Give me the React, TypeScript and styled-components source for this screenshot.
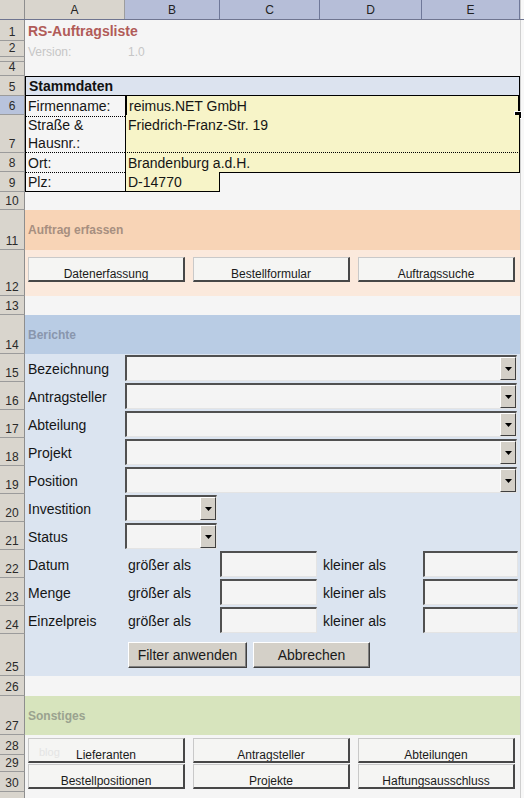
import React from 'react';
import styled, { createGlobalStyle } from 'styled-components';

const GlobalStyle = createGlobalStyle`
  * { box-sizing: border-box; }
  html, body { margin: 0; padding: 0; background: #f5f5f5; }
  body { font-family: 'Liberation Sans', Arial, sans-serif; overflow: hidden; }
`;

const Sheet = styled.div`
  width: 524px;
  background: #f5f5f5;
  color: #111;
`;

const HeadRow = styled.div`
  display: flex;
  height: 20px;
  border-bottom: 1px solid #6f7590;
`;

const Corner = styled.div`
  width: 25px;
  background: #d9d5cd;
  border-right: 1px solid #8e8e8e;
`;

const ColHead = styled.div<{ $w: number; $sel?: boolean }>`
  width: ${p => p.$w}px;
  background: ${p => (p.$sel ? '#b6bed8' : '#d9d5cd')};
  border-right: 1px solid ${p => (p.$sel ? '#6f7899' : '#9d9d9d')};
  font-size: 12px;
  line-height: 19px;
  padding-top: 1px;
  text-align: center;
  color: #222;
`;

const Row = styled.div<{ $h: number }>`
  display: flex;
  height: ${p => p.$h}px;
`;

const RowHead = styled.div<{ $sel?: boolean; $h?: number }>`
  width: 25px;
  flex: 0 0 auto;
  height: ${p => (p.$h ? `${p.$h}px` : 'auto')};
  background: ${p => (p.$sel ? '#b8c3dc' : '#d9d5cd')};
  border-right: 1px solid #8e8e8e;
  border-bottom: 1px solid #9b9b9b;
  display: flex;
  align-items: flex-end;
  justify-content: center;
  overflow: hidden;
  font-size: 12px;
  line-height: 14px;
  padding-bottom: 1px;
  color: #2a2a2a;
`;

const HeadStack = styled.div`
  display: flex;
  flex-direction: column;
`;

const Cells = styled.div<{ $bg?: string }>`
  display: grid;
  grid-template-columns: 100px 95px 100px 102px 98px;
  width: 495px;
  flex: 0 0 495px;
  background: ${p => p.$bg || '#f5f5f5'};
  align-items: center;
  font-size: 14px;
`;

const Edge = styled.div`
  flex: 1;
  border-left: 1px solid #cfcfcf;
  background: #f8f8f8;
`;

const Title = styled.div`
  grid-column: 1 / 6;
  padding-left: 3px;
  font-weight: bold;
  font-size: 14px;
  color: #b15b58;
`;

const Muted = styled.div<{ $col: string }>`
  grid-column: ${p => p.$col};
  padding: 4px 0 0 3px;
  font-size: 12px;
  color: #c6c6c6;
`;

const BoxHead = styled.div`
  grid-column: 1 / 6;
  align-self: stretch;
  background: #dce3ef;
  border: 1px solid #000;
  padding-left: 3px;
  font-weight: bold;
  font-size: 14px;
  line-height: 18px;
`;

const Field = styled.div<{
  $col: string;
  $fill?: boolean;
  $bottom: 'dotted' | 'solid';
  $right?: boolean;
  $sel?: boolean;
}>`
  grid-column: ${p => p.$col};
  align-self: stretch;
  position: relative;
  background: ${p => (p.$fill ? '#f7f4c8' : 'transparent')};
  border-left: ${p => (p.$sel ? 2 : 1)}px solid #000;
  border-right: ${p => (p.$sel ? '2px solid #000' : p.$right ? '1px solid #000' : 'none')};
  border-bottom: ${p => (p.$sel ? 2 : 1)}px ${p => p.$bottom} #000;
  padding: 1px 2px 0;
  font-size: 14px;
  line-height: 18px;
  color: #151515;

  ${p =>
    p.$sel &&
    `&::after {
      content: '';
      position: absolute;
      right: -4px;
      bottom: -4px;
      width: 6px;
      height: 6px;
      background: #000;
      border: 1px solid #fff;
    }`}
`;

const Section = styled.div<{ $color: string }>`
  grid-column: 1 / 6;
  padding-left: 3px;
  font-weight: bold;
  font-size: 12px;
  color: ${p => p.$color};
`;

const ButtonBar = styled.div<{ $top: number }>`
  grid-column: 1 / 6;
  align-self: start;
  display: grid;
  grid-template-columns: repeat(3, 157px);
  grid-auto-rows: 25px;
  column-gap: 8px;
  row-gap: 1px;
  padding: ${p => p.$top}px 0 0 3px;
`;

const FlatButton = styled.div`
  position: relative;
  background: #f5f5f3;
  border-top: 1px solid #c9c9c9;
  border-left: 1px solid #c9c9c9;
  border-right: 2px solid #474747;
  border-bottom: 2px solid #474747;
  overflow: hidden;
  text-align: center;
  font-size: 12px;
  line-height: 12px;
  padding-top: 10px;
  color: #1a1a1a;
`;

const Watermark = styled.span`
  position: absolute;
  left: 10px;
  top: 7px;
  font-size: 11px;
  color: #e4e4e4;
`;

const Label = styled.div<{ $col: string }>`
  grid-column: ${p => p.$col};
  padding: 2px 0 0 3px;
  font-size: 14px;
  color: #151515;
  white-space: nowrap;
`;

const Combo = styled.div<{ $col: string }>`
  grid-column: ${p => p.$col};
  height: 26px;
  margin-right: 3px;
  display: flex;
  justify-content: flex-end;
  background: #f4f4f4;
  border-top: 2px solid #505050;
  border-left: 2px solid #505050;
  border-right: 1px solid #e4e4e4;
  border-bottom: 1px solid #e4e4e4;
`;

const DropButton = styled.div`
  width: 16px;
  background: #d4d0c8;
  border-top: 1px solid #fff;
  border-left: 1px solid #fff;
  border-right: 1px solid #404040;
  border-bottom: 1px solid #404040;
  display: flex;
  align-items: center;
  justify-content: center;
`;

const InputBox = styled.div<{ $col: string; $left?: number; $right?: number }>`
  grid-column: ${p => p.$col};
  height: 26px;
  margin-left: ${p => p.$left || 0}px;
  margin-right: ${p => p.$right || 0}px;
  background: #f4f4f4;
  border-top: 2px solid #505050;
  border-left: 2px solid #505050;
  border-right: 1px solid #e4e4e4;
  border-bottom: 1px solid #e4e4e4;
`;

const FilterBar = styled.div`
  grid-column: 1 / 6;
  display: flex;
  gap: 6px;
  padding-left: 103px;
`;

const GrayButton = styled.div<{ $w: number }>`
  width: ${p => p.$w}px;
  height: 26px;
  background: #d4d0c8;
  border-top: 1px solid #fff;
  border-left: 1px solid #fff;
  border-right: 1px solid #404040;
  border-bottom: 1px solid #404040;
  box-shadow: inset -1px -1px 0 #808080;
  text-align: center;
  font-size: 14px;
  line-height: 24px;
  color: #1a1a1a;
`;

const Arrow = () => (
  <svg width="7" height="4" viewBox="0 0 7 4">
    <polygon points="0,0 7,0 3.5,4" fill="#000" />
  </svg>
);

const SheetRow: React.FC<{
  n: number;
  h: number;
  bg?: string;
  sel?: boolean;
  children?: React.ReactNode;
}> = ({ n, h, bg, sel, children }) => (
  <Row $h={h}>
    <RowHead $sel={sel}>{n}</RowHead>
    <Cells $bg={bg}>{children}</Cells>
    <Edge />
  </Row>
);

const BLUE = '#dbe4f0';

const combos = ['Bezeichnung', 'Antragsteller', 'Abteilung', 'Projekt', 'Position'];
const ranges = ['Datum', 'Menge', 'Einzelpreis'];

const App: React.FC = () => (
  <>
    <GlobalStyle />
    <Sheet>
      <HeadRow>
        <Corner />
        <ColHead $w={100}>A</ColHead>
        <ColHead $w={95} $sel>B</ColHead>
        <ColHead $w={100} $sel>C</ColHead>
        <ColHead $w={102} $sel>D</ColHead>
        <ColHead $w={98} $sel>E</ColHead>
        <Edge />
      </HeadRow>

      <SheetRow n={1} h={21}>
        <Title>RS-Auftragsliste</Title>
      </SheetRow>
      <SheetRow n={2} h={16}>
        <Muted $col="1">Version:</Muted>
        <Muted $col="2">1.0</Muted>
      </SheetRow>
      <SheetRow n={3} h={5} />
      <SheetRow n={4} h={14} />

      <SheetRow n={5} h={20}>
        <BoxHead>Stammdaten</BoxHead>
      </SheetRow>
      <SheetRow n={6} h={19} sel>
        <Field $col="1" $bottom="dotted">Firmenname:</Field>
        <Field $col="2 / 6" $fill $bottom="dotted" $sel>reimus.NET GmbH</Field>
      </SheetRow>
      <SheetRow n={7} h={38}>
        <Field $col="1" $bottom="dotted">
          Straße &amp;
          <br />
          Hausnr.:
        </Field>
        <Field $col="2 / 6" $fill $bottom="dotted" $right>Friedrich-Franz-Str. 19</Field>
      </SheetRow>
      <SheetRow n={8} h={19}>
        <Field $col="1" $bottom="dotted">Ort:</Field>
        <Field $col="2 / 6" $fill $bottom="solid" $right>Brandenburg a.d.H.</Field>
      </SheetRow>
      <SheetRow n={9} h={20}>
        <Field $col="1" $bottom="solid">Plz:</Field>
        <Field $col="2" $fill $bottom="solid" $right>D-14770</Field>
      </SheetRow>
      <SheetRow n={10} h={18} />

      <SheetRow n={11} h={40} bg="#f8d4b6">
        <Section $color="#a78f80">Auftrag erfassen</Section>
      </SheetRow>
      <SheetRow n={12} h={46} bg="#fbe9dc">
        <ButtonBar $top={7}>
          <FlatButton>Datenerfassung</FlatButton>
          <FlatButton>Bestellformular</FlatButton>
          <FlatButton>Auftragssuche</FlatButton>
        </ButtonBar>
      </SheetRow>
      <SheetRow n={13} h={19} />

      <SheetRow n={14} h={39} bg="#b9cce4">
        <Section $color="#8996ad">Berichte</Section>
      </SheetRow>
      {combos.map((c, i) => (
        <SheetRow key={c} n={15 + i} h={28} bg={BLUE}>
          <Label $col="1">{c}</Label>
          <Combo $col="2 / 6">
            <DropButton>
              <Arrow />
            </DropButton>
          </Combo>
        </SheetRow>
      ))}
      {['Investition', 'Status'].map((c, i) => (
        <SheetRow key={c} n={20 + i} h={28} bg={BLUE}>
          <Label $col="1">{c}</Label>
          <Combo $col="2">
            <DropButton>
              <Arrow />
            </DropButton>
          </Combo>
        </SheetRow>
      ))}
      {ranges.map((c, i) => (
        <SheetRow key={c} n={22 + i} h={28} bg={BLUE}>
          <Label $col="1">{c}</Label>
          <Label $col="2">größer als</Label>
          <InputBox $col="3" $right={3} />
          <Label $col="4">kleiner als</Label>
          <InputBox $col="5" $left={1} $right={2} />
        </SheetRow>
      ))}
      <SheetRow n={25} h={42} bg={BLUE}>
        <FilterBar>
          <GrayButton $w={119}>Filter anwenden</GrayButton>
          <GrayButton $w={117}>Abbrechen</GrayButton>
        </FilterBar>
      </SheetRow>
      <SheetRow n={26} h={20} />

      <SheetRow n={27} h={39} bg="#d7e4bd">
        <Section $color="#9aa28f">Sonstiges</Section>
      </SheetRow>
      <Row $h={57}>
        <HeadStack>
          <RowHead $h={20}>28</RowHead>
          <RowHead $h={17}>29</RowHead>
          <RowHead $h={20}>30</RowHead>
        </HeadStack>
        <Cells>
          <ButtonBar $top={3}>
            <FlatButton>
              <Watermark>blog</Watermark>
              Lieferanten
            </FlatButton>
            <FlatButton>Antragsteller</FlatButton>
            <FlatButton>Abteilungen</FlatButton>
            <FlatButton>Bestellpositionen</FlatButton>
            <FlatButton>Projekte</FlatButton>
            <FlatButton>Haftungsausschluss</FlatButton>
          </ButtonBar>
        </Cells>
        <Edge />
      </Row>
      <SheetRow n={31} h={20} />
    </Sheet>
  </>
);

export default App;
